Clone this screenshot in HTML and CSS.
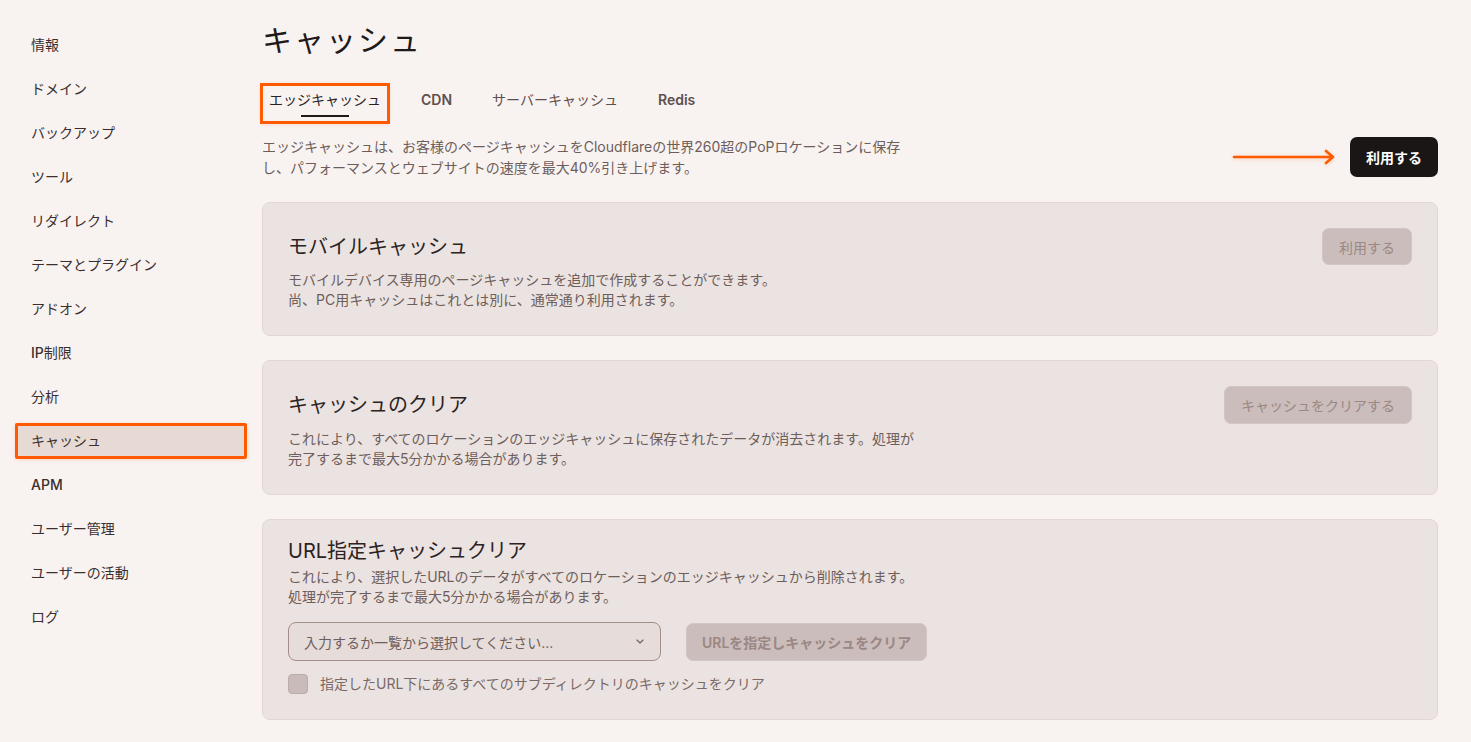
FILE: index.html
```html
<!DOCTYPE html>
<html lang="ja">
<head>
<meta charset="utf-8">
<title>キャッシュ</title>
<link rel="stylesheet" href="styles.css">
</head>
<body>
<div class="app">
  <nav class="sidebar">
    <a class="nav-item">情報</a>
    <a class="nav-item">ドメイン</a>
    <a class="nav-item">バックアップ</a>
    <a class="nav-item">ツール</a>
    <a class="nav-item">リダイレクト</a>
    <a class="nav-item">テーマとプラグイン</a>
    <a class="nav-item">アドオン</a>
    <a class="nav-item"><span class="latin">IP</span>制限</a>
    <a class="nav-item">分析</a>
    <a class="nav-item active">キャッシュ</a>
    <a class="nav-item"><span class="latin">APM</span></a>
    <a class="nav-item">ユーザー管理</a>
    <a class="nav-item">ユーザーの活動</a>
    <a class="nav-item">ログ</a>
  </nav>

  <main class="main">
    <h1 class="page-title">キャッシュ</h1>

    <div class="tabs">
      <span class="tab active">エッジキャッシュ</span>
      <span class="tab tab-latin">CDN</span>
      <span class="tab">サーバーキャッシュ</span>
      <span class="tab tab-latin">Redis</span>
    </div>

    <div class="intro">
      <p class="intro-text">エッジキャッシュは、お客様のページキャッシュをCloudflareの世界260超のPoPロケーションに保存<br>し、パフォーマンスとウェブサイトの速度を最大40%引き上げます。</p>
      <div class="primary-wrap">
        <svg class="arrow" width="106" height="16" viewBox="0 0 106 16">
          <path d="M2 8 H101 M94 2 L101 8 L94 14" fill="none" stroke="#ff5a00" stroke-width="2.6" stroke-linecap="round" stroke-linejoin="round"/>
        </svg>
        <button class="btn btn-primary">利用する</button>
      </div>
    </div>

    <section class="card">
      <div class="card-head">
        <h2 class="card-title">モバイルキャッシュ</h2>
        <button class="btn btn-disabled">利用する</button>
      </div>
      <p class="card-text">モバイルデバイス専用のページキャッシュを追加で作成することができます。<br>尚、PC用キャッシュはこれとは別に、通常通り利用されます。</p>
    </section>

    <section class="card">
      <div class="card-head">
        <h2 class="card-title">キャッシュのクリア</h2>
        <button class="btn btn-disabled btn-wide">キャッシュをクリアする</button>
      </div>
      <p class="card-text">これにより、すべてのロケーションのエッジキャッシュに保存されたデータが消去されます。処理が<br>完了するまで最大5分かかる場合があります。</p>
    </section>

    <section class="card card-url">
      <h2 class="card-title">URL指定キャッシュクリア</h2>
      <p class="card-text card-text-tight">これにより、選択したURLのデータがすべてのロケーションのエッジキャッシュから削除されます。<br>処理が完了するまで最大5分かかる場合があります。</p>
      <div class="url-row">
        <div class="select">
          <span class="select-placeholder">入力するか一覧から選択してください...</span>
          <svg class="chevron" width="8" height="5" viewBox="0 0 8 5"><path d="M1 1 L4 4 L7 1" fill="none" stroke="#6e5e5b" stroke-width="1.1" stroke-linecap="round" stroke-linejoin="round"/></svg>
        </div>
        <button class="btn btn-disabled btn-url">URLを指定しキャッシュをクリア</button>
      </div>
      <label class="check-row">
        <span class="checkbox"></span>
        <span class="check-label">指定したURL下にあるすべてのサブディレクトリのキャッシュをクリア</span>
      </label>
    </section>
  </main>
</div>
</body>
</html>
```

FILE: styles.css
```css
* { box-sizing: border-box; }

body {
  margin: 0;
  background: #f8f3f1;
  font-family: "Inter", "Noto Sans CJK JP", sans-serif;
  color: #2b2323;
}

.app {
  display: flex;
  gap: 15px;
  padding: 0 33px 0 15px;
}

.sidebar {
  width: 232px;
  flex: none;
  display: flex;
  flex-direction: column;
  gap: 8px;
  padding-top: 27px;
}

.nav-item {
  display: block;
  height: 36px;
  line-height: 36px;
  padding-left: 16px;
  font-size: 14px;
  font-weight: 400;
  color: #3a2f2e;
  border-radius: 2px;
}

.latin {
  font-weight: 500;
}

.nav-item.active {
  background: #e7dad4;
  outline: 3px solid #ff5a00;
  outline-offset: -3px;
  box-shadow: 0 1px 4px rgba(255, 90, 0, 0.18);
}

.main {
  flex: 1;
  min-width: 0;
  padding-top: 22px;
}

.page-title {
  margin: 0;
  font-size: 30px;
  line-height: 36px;
  font-weight: 400;
  letter-spacing: 2px;
  color: #1f1919;
}

.tabs {
  display: flex;
  gap: 24px;
  margin-top: 26px;
  margin-left: -1px;
}

.tab {
  display: flex;
  flex-direction: column;
  align-items: center;
  padding: 6px 8px;
  font-size: 14px;
  line-height: 20px;
  font-weight: 400;
  color: #5e4f4d;
}

.tab-latin {
  font-weight: 600;
}

.tab::after {
  content: "";
  display: block;
  width: 48px;
  height: 2px;
  margin-top: 5px;
  background: transparent;
}

.tab-latin::after {
  width: 0;
}

.tab.active {
  color: #2b2323;
  outline: 3px solid #ff5a00;
  outline-offset: -2px;
  box-shadow: 0 1px 5px rgba(255, 90, 0, 0.18);
}

.tab.active::after {
  background: #1f1919;
}

.intro {
  display: flex;
  align-items: center;
  justify-content: space-between;
  margin-top: 13px;
}

.intro-text {
  margin: 0;
  font-size: 14px;
  line-height: 21px;
  color: #6e5e5b;
}

.primary-wrap {
  position: relative;
}

.arrow {
  position: absolute;
  right: calc(100% + 12px);
  top: 50%;
  transform: translateY(-50%);
  filter: drop-shadow(0 1px 2px rgba(255, 90, 0, 0.25));
}

.btn {
  font-family: inherit;
  font-size: 14px;
  border-radius: 7px;
  cursor: default;
}

.btn-primary {
  height: 40px;
  padding: 0 16px;
  background: #1b1616;
  color: #ffffff;
  border: none;
  font-weight: 600;
}

.btn-disabled {
  height: 37px;
  padding: 0 16px;
  background: #cabdbb;
  color: #9b8783;
  border: 1px solid #d2c5c2;
  font-weight: 400;
}

.btn-wide {
  height: 38px;
  padding: 0 16px;
}

.btn-url {
  height: 38px;
  padding: 0 15px;
  font-weight: 600;
}

.card {
  margin-top: 24px;
  background: #ebe3e1;
  border: 1px solid #e4d7d1;
  border-radius: 8px;
  padding: 25px 25px 25px 25px;
}

.card + .card {
  margin-top: 24px;
}

.card-head {
  display: flex;
  align-items: center;
  justify-content: space-between;
}

.card-title {
  margin: 0;
  font-size: 20px;
  line-height: 26px;
  font-weight: 400;
  color: #2b2323;
}

.card-text {
  margin: 5px 0 0;
  font-size: 14px;
  line-height: 20px;
  color: #6e5e5b;
}

.card-url {
  padding-top: 18px;
  padding-bottom: 25px;
}

.card-text-tight {
  margin-top: 3px;
}

.url-row {
  display: flex;
  align-items: center;
  gap: 25px;
  margin-top: 15px;
}

.select {
  width: 373px;
  height: 39px;
  display: flex;
  align-items: center;
  justify-content: space-between;
  padding: 0 16px 0 15px;
  background: #e6dcda;
  border: 1px solid #a38d89;
  border-radius: 8px;
}

.select-placeholder {
  font-size: 14px;
  color: #6e5e5b;
}

.check-row {
  display: flex;
  align-items: center;
  gap: 12px;
  margin-top: 13px;
}

.checkbox {
  width: 20px;
  height: 20px;
  background: #c9bbb9;
  border: 1px solid #bcadaa;
  border-radius: 4px;
}

.check-label {
  font-size: 14px;
  line-height: 20px;
  color: #7a6a67;
}
```
